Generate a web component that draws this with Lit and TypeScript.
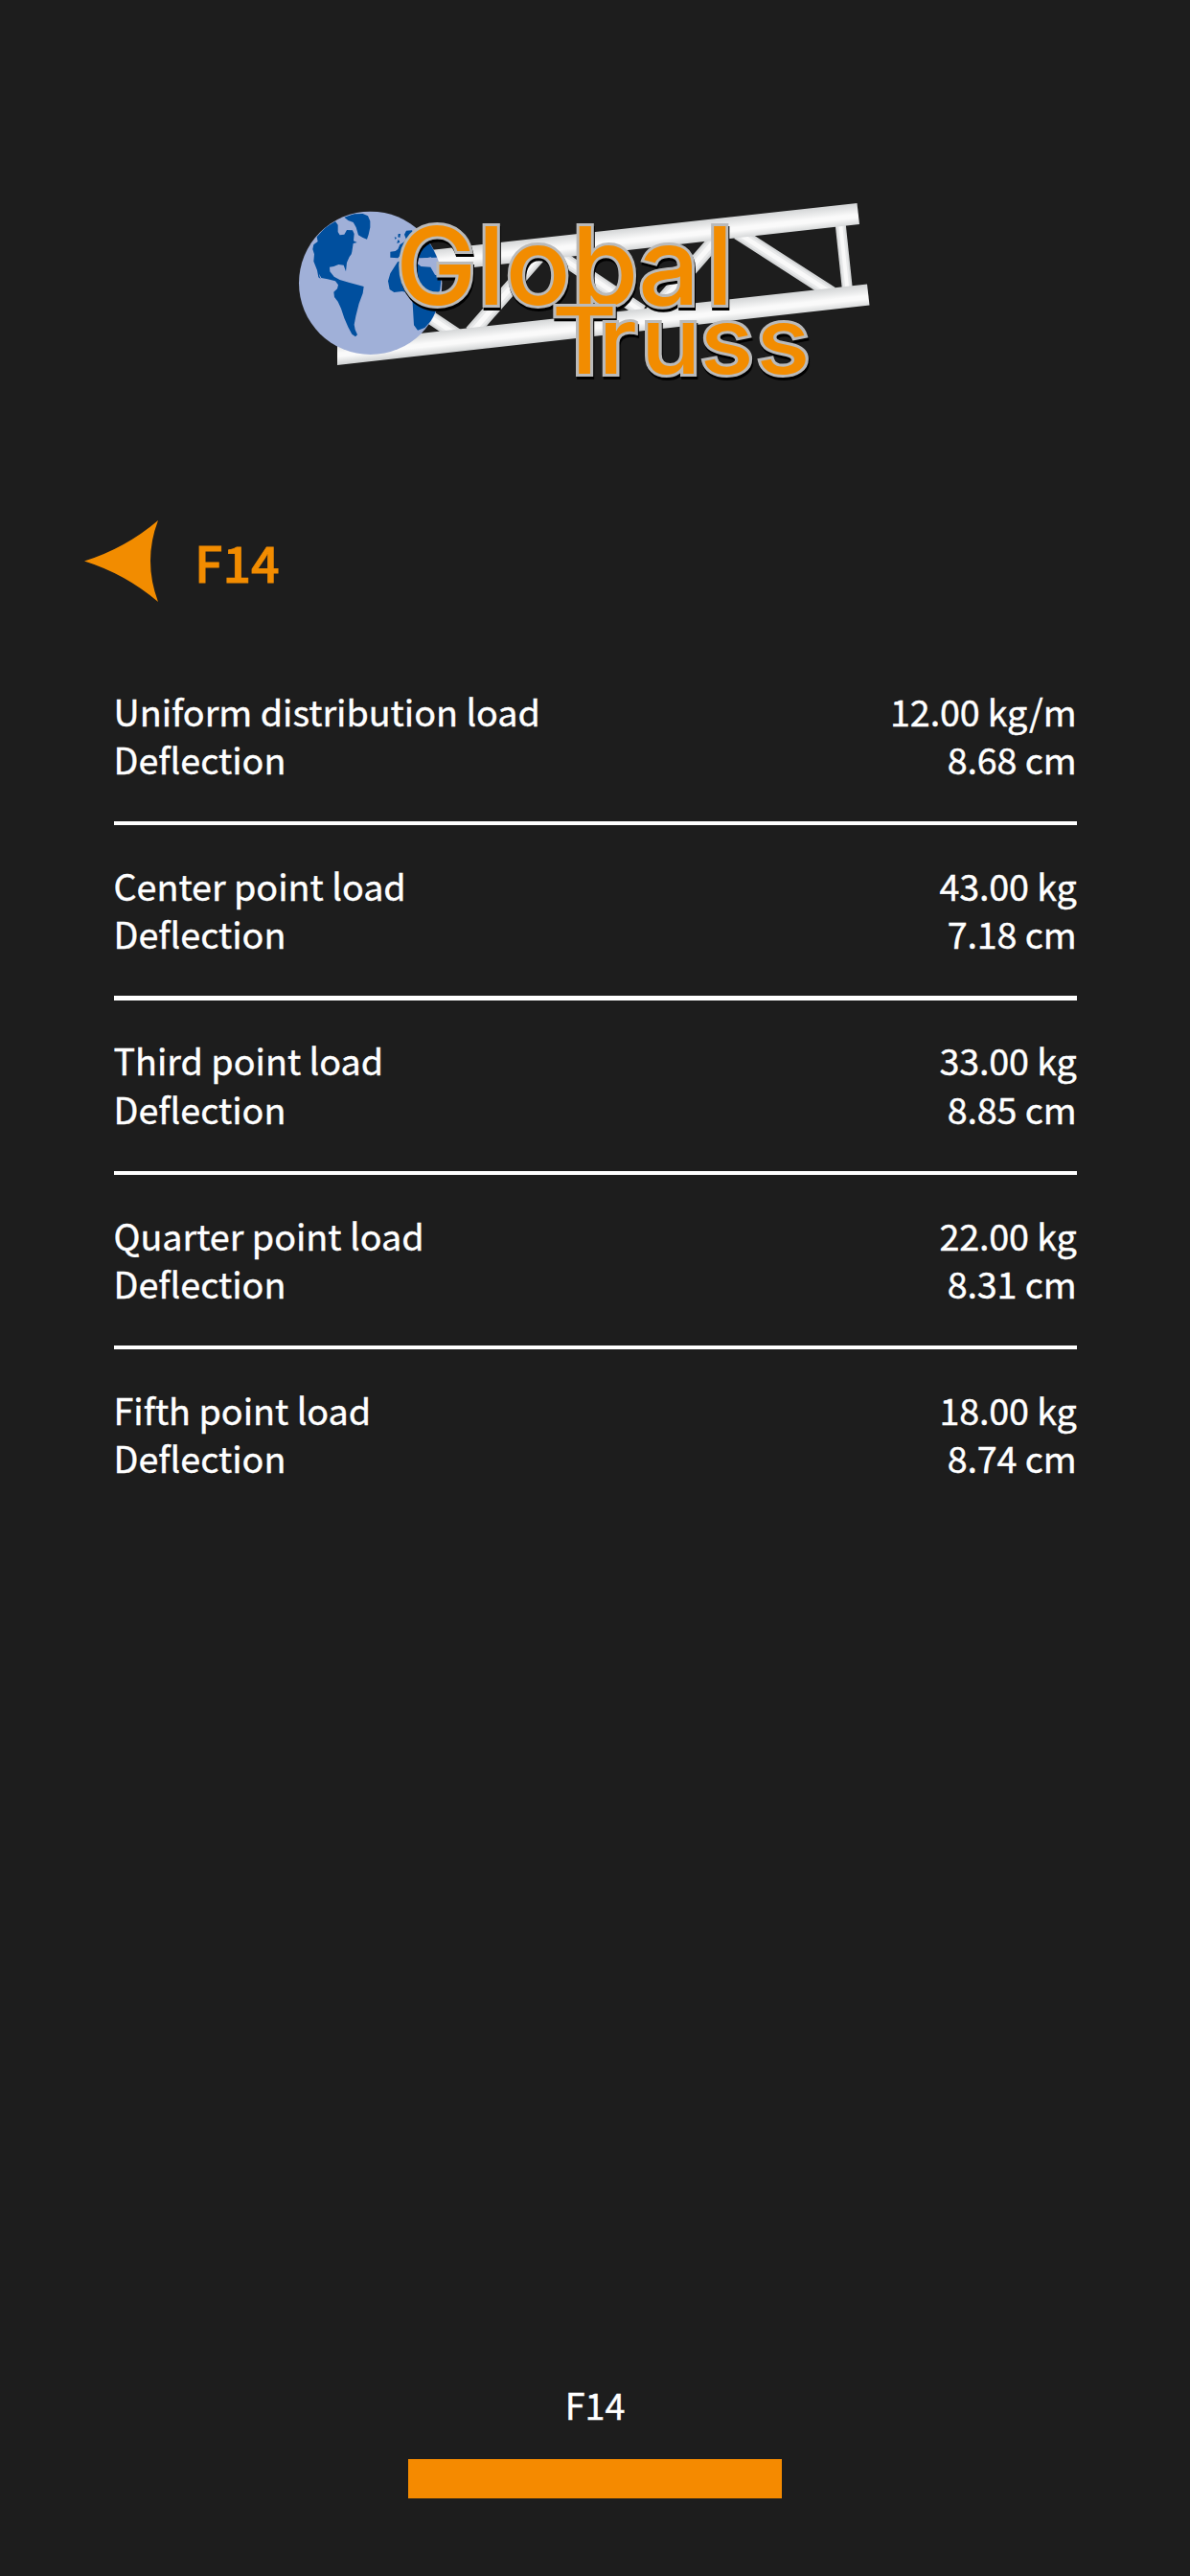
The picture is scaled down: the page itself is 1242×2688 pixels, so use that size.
import { LitElement, html, svg, css } from 'lit';
import { customElement, property } from 'lit/decorators.js';

interface LoadEntry {
  label: string;
  load: string;
  deflection: string;
}

const TRUSS = 'F14';

const LOADS: LoadEntry[] = [
  { label: 'Uniform distribution load', load: '12.00 kg/m', deflection: '8.68 cm' },
  { label: 'Center point load', load: '43.00 kg', deflection: '7.18 cm' },
  { label: 'Third point load', load: '33.00 kg', deflection: '8.85 cm' },
  { label: 'Quarter point load', load: '22.00 kg', deflection: '8.31 cm' },
  { label: 'Fifth point load', load: '18.00 kg', deflection: '8.74 cm' },
];

// x1, y1, x2, y2, tube width
const BRACES = [
  [440, 325, 488, 357, 14],
  [492, 347, 570, 258, 15],
  [585, 268, 670, 325, 14],
  [680, 327, 748, 249, 15],
  [770, 243, 868, 306, 14],
  [877, 232, 884.5, 303, 11],
];

@customElement('brand-logo')
export class BrandLogo extends LitElement {
  static styles = css`
    :host {
      display: block;
    }

    svg {
      display: block;
      width: 620px;
      height: 240px;
    }

    .word {
      font-family: Inter, 'Liberation Sans', sans-serif;
      font-weight: 500;
      fill: #f28c00;
      stroke: #bababa;
      stroke-width: 6px;
      stroke-linejoin: miter;
      paint-order: stroke;
      filter: drop-shadow(1px 3px 0 #000);
    }

    .global {
      font-size: 113px;
    }

    .truss {
      font-size: 96.5px;
    }
  `;

  render() {
    return html`
      <svg viewBox="300 180 620 240">
        <defs>
          <linearGradient id="top" gradientUnits="userSpaceOnUse" x1="600" y1="244" x2="602.5" y2="267">
            <stop offset="0" stop-color="#d3d5d6" />
            <stop offset="0.5" stop-color="#fafafa" />
            <stop offset="0.65" stop-color="#fafafa" />
            <stop offset="1" stop-color="#d3d5d6" />
          </linearGradient>
          <linearGradient id="bottom" gradientUnits="userSpaceOnUse" x1="600" y1="330" x2="602.5" y2="353">
            <stop offset="0" stop-color="#d3d5d6" />
            <stop offset="0.5" stop-color="#fafafa" />
            <stop offset="0.65" stop-color="#fafafa" />
            <stop offset="1" stop-color="#d3d5d6" />
          </linearGradient>
          <clipPath id="disc"><circle cx="260" cy="286" r="223" /></clipPath>
        </defs>

        ${BRACES.map(
          ([x1, y1, x2, y2, w]) => svg`
            <line x1=${x1} y1=${y1} x2=${x2} y2=${y2} stroke="#d6d8d9" stroke-width=${w} />
            <line x1=${x1} y1=${y1} x2=${x2} y2=${y2} stroke="#e8e9ea" stroke-width=${w * 0.7} />
            <line x1=${x1} y1=${y1} x2=${x2} y2=${y2} stroke="#f9f9f9" stroke-width=${w * 0.35} />
          `
        )}
        <path fill="url(#top)" d="M440 262 894.5 212 897 234 440 285Z" />
        <path fill="url(#bottom)" d="M352 357.5 905 296.5 907.5 318.5 352 381Z" />

        <g transform="translate(300 200) scale(0.33333)">
          <circle cx="260" cy="286" r="224" fill="#a0b0d8" />
          <g clip-path="url(#disc)" fill="#004f9e">
            <path
              d="M92 142 118 112 150 93 158 104 158 126 164 136 178 134 186 120 204 121 209 132 207 154 218 159 206 162 202 188 200 196 194 204 186 222 183 250 176 230 160 228 145 234 132 236 133 250 146 266 164 276 192 284 239 297 236 318 224 350 214 390 209 416 212 432 219 448 213 454 202 446 190 424 178 396 168 366 158 344 147 330 145 314 156 304 159 292 150 280 126 274 106 270 98 256 96 246 101 266 104 273 97 268 93 246 82 218 84 196 79 180 82 166 95 156Z"
            />
            <path
              d="M178 80 208 70 236 69 252 76 259 92 259 112 254 134 249 149 236 144 222 136 215 112 206 96 190 90Z"
            />
            <path
              d="M347 132 354 132 352 144 346 142ZM335 142 342 144 338 150ZM348 150 352 158 343 162 345 154ZM366 134 372 122 390 121 396 134 372 150ZM322 188 338 186 346 180 352 166 364 158 372 148 480 170 488 205 414 208 354 198 346 208 322 206Z"
            />
            <path
              d="M345 220 366 212 400 220 418 234 448 236 462 260 482 268 478 306 462 350 466 374 452 402 430 426 408 434 396 418 392 350 388 320 360 312 334 315 320 306 315 280 322 256Z"
            />
          </g>
          <path fill="#a0b0d8" d="M412 212 450 205 454 232 422 232Z" />
        </g>

        <text class="word global" y="317.5" x="413 498.5 527.5 596.5 666 737">Global</text>
        <text
          class="word truss"
          transform="translate(576 390) scale(1.08 1)"
          y="0"
          x="0 45 86 143 197.5"
        >Truss</text>
      </svg>
    `;
  }
}

@customElement('load-entry')
export class LoadEntryRow extends LitElement {
  @property() label = '';
  @property() load = '';
  @property() deflection = '';

  static styles = css`
    :host {
      display: block;
    }

    .line {
      display: flex;
      justify-content: space-between;
      line-height: 50.2px;
    }

    .value {
      letter-spacing: -0.15px;
    }
  `;

  render() {
    return html`
      <div class="line"><span>${this.label}</span><span class="value">${this.load}</span></div>
      <div class="line"><span>Deflection</span><span class="value">${this.deflection}</span></div>
    `;
  }
}

@customElement('app-root')
export class AppRoot extends LitElement {
  static styles = css`
    :host {
      display: flex;
      flex-direction: column;
      box-sizing: border-box;
      height: 2688px;
      padding: 180px 118.5px 81.5px;
      background: #1d1d1d;
      color: #fff;
      font-family: 'Noto Sans CJK SC', 'Noto Sans', sans-serif;
      font-size: 37.7px;
      -webkit-text-stroke: 0.4px currentColor;
    }

    brand-logo {
      margin-left: 181.5px;
      -webkit-text-stroke: 0;
    }

    .heading {
      display: flex;
      align-items: center;
      gap: 37px;
      height: 86px;
      margin: 123px 0 0 -30.5px;
      color: #f28c00;
    }

    .back {
      width: 78px;
      height: 86px;
    }

    h1 {
      margin: 0;
      font-size: 52px;
      font-weight: 500;
      line-height: 80px;
      -webkit-text-stroke: 0.8px currentColor;
    }

    .loads {
      margin-top: 87.7px;
    }

    .rule {
      height: 4.35px;
      margin: 39.8px 0 37.8px;
      background: #fff;
    }

    .footer {
      display: flex;
      flex-direction: column;
      align-items: center;
      gap: 32px;
      margin-top: auto;
      line-height: 50px;
    }

    .bar {
      width: 390px;
      height: 40.5px;
      background: #f58a00;
    }
  `;

  render() {
    return html`
      <brand-logo></brand-logo>
      <div class="heading">
        <svg class="back" viewBox="0 0 78 86" fill="#f28c00">
          <path d="M0 42.5Q43 29 77 0Q61 42 77 85Q43 56 0 42.5Z" />
        </svg>
        <h1>${TRUSS}</h1>
      </div>
      <div class="loads">
        ${LOADS.map(
          (entry, i) => html`
            ${i > 0 ? html`<div class="rule"></div>` : ''}
            <load-entry
              .label=${entry.label}
              .load=${entry.load}
              .deflection=${entry.deflection}
            ></load-entry>
          `
        )}
      </div>
      <div class="footer">
        <span>${TRUSS}</span>
        <div class="bar"></div>
      </div>
    `;
  }
}

declare global {
  interface HTMLElementTagNameMap {
    'app-root': AppRoot;
    'brand-logo': BrandLogo;
    'load-entry': LoadEntryRow;
  }
}
